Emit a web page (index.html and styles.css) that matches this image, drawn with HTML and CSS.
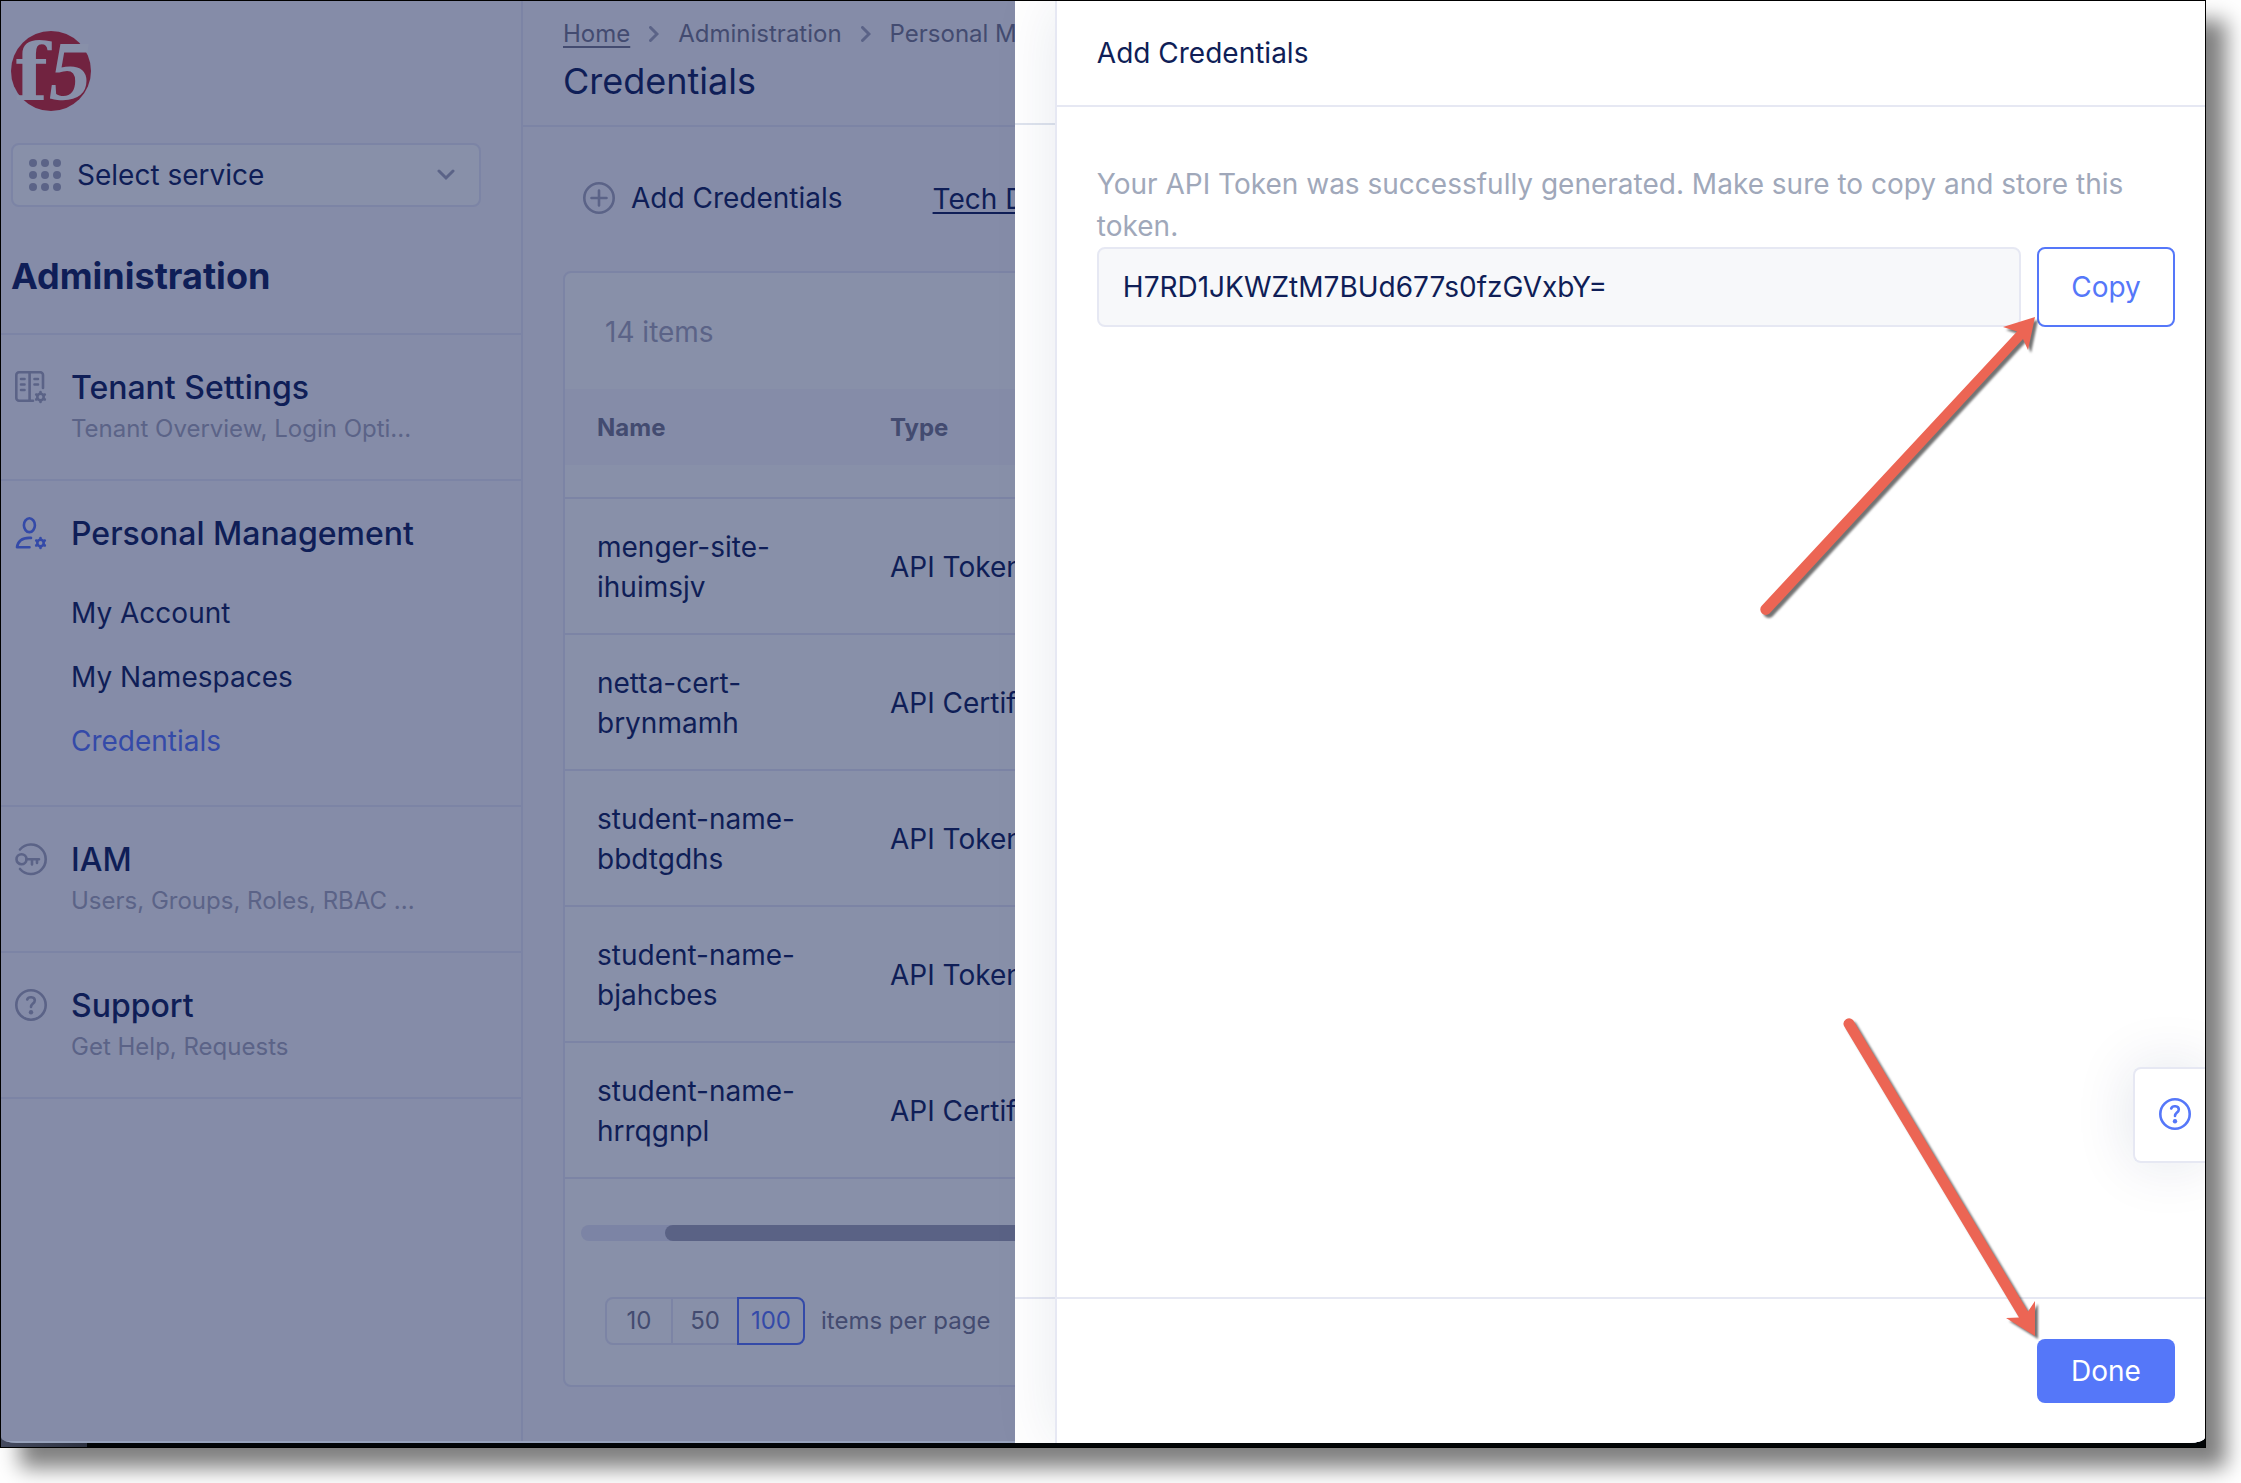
FILE: index.html
```html
<!DOCTYPE html>
<html lang="en">
<head>
<meta charset="utf-8">
<title>Credentials</title>
<link rel="stylesheet" href="styles.css">
</head>
<body>
<div class="window">
  <div class="screen">
    <div class="dashboard">
      <aside class="sidebar">
        <div class="sidebar-head">
          <svg class="logo" viewBox="0 0 80 80" role="img" aria-label="f5">
            <circle class="logo-disc" cx="40" cy="40" r="40"/>
            <text class="logo-f" x="3" y="69">f</text>
            <text class="logo-5" x="38" y="69">5</text>
          </svg>
          <div class="service">
            <svg class="icon fill" viewBox="0 0 32 32" aria-hidden="true">
              <circle cx="4" cy="4" r="4"/><circle cx="16" cy="4" r="4"/><circle cx="28" cy="4" r="4"/>
              <circle cx="4" cy="16" r="4"/><circle cx="16" cy="16" r="4"/><circle cx="28" cy="16" r="4"/>
              <circle cx="4" cy="28" r="4"/><circle cx="16" cy="28" r="4"/><circle cx="28" cy="28" r="4"/>
            </svg>
            <select class="service-select" aria-label="Service"><option>Select service</option></select>
            <svg class="chevron-down" viewBox="0 0 18 12" aria-hidden="true"><path d="M2 2l7 7 7-7"/></svg>
          </div>
          <h2 class="workspace">Administration</h2>
        </div>
        <nav class="nav">
          <section class="nav-item">
            <svg class="icon" viewBox="0 0 32 32" aria-hidden="true">
              <path d="M28 17V4a2.700 2.700 0 0 0-2.700-2.700H4A2.700 2.700 0 0 0 1.300 4v23A2.700 2.700 0 0 0 4 29.700h14M14.600 1.300v28M6 8h3.500M6 13.500h3.500M6 19h3.500M19.500 8H23M19.500 13.500H23"/>
              <g id="gear">
                <circle cx="25.500" cy="26" r="3.200"/>
                <path d="M25.500 21v1M25.500 30v1M21.200 23.500l.9.500M28.900 28l.9.500M21.200 28.500l.9-.5M28.900 24l.9-.5"/>
              </g>
            </svg>
            <div>
              <a class="nav-title" href="#">Tenant Settings</a>
              <p class="nav-sub">Tenant Overview, Login Opti...</p>
            </div>
          </section>
          <section class="nav-item active">
            <svg class="icon" viewBox="0 0 32 32" aria-hidden="true">
              <ellipse cx="14.400" cy="8.200" rx="5.500" ry="6.900"/>
              <path d="M16 20.900C8 20.400 3 23.500 2 30.300h12.500"/>
              <use href="#gear"/>
            </svg>
            <div>
              <a class="nav-title" href="#">Personal Management</a>
              <ul class="nav-links">
                <li><a href="#">My Account</a></li>
                <li><a href="#">My Namespaces</a></li>
                <li><a class="current" href="#">Credentials</a></li>
              </ul>
            </div>
          </section>
          <section class="nav-item">
            <svg class="icon" viewBox="0 0 32 32" aria-hidden="true">
              <path d="M5 6.500a14.700 14.700 0 1 1 0 19.500M11.500 16.200H24M17 16.500v5M22 16.500v3.500"/>
              <circle cx="6.500" cy="16.200" r="5"/>
            </svg>
            <div>
              <a class="nav-title" href="#">IAM</a>
              <p class="nav-sub">Users, Groups, Roles, RBAC ...</p>
            </div>
          </section>
          <section class="nav-item">
            <svg class="icon" viewBox="0 0 32 32" aria-hidden="true">
              <circle cx="16" cy="16" r="14.700"/>
              <path d="M12.200 10.500c1.200-3.400 7.600-3 7.600 1 0 3-3.800 3.200-3.800 6.500"/>
              <circle class="dot" cx="16" cy="23.200" r="2.200"/>
            </svg>
            <div>
              <a class="nav-title" href="#">Support</a>
              <p class="nav-sub">Get Help, Requests</p>
            </div>
          </section>
        </nav>
      </aside>
      <main class="main">
        <header class="page-head">
          <nav class="crumbs" aria-label="Breadcrumb">
            <a href="#">Home</a>
            <svg class="chevron-right" viewBox="0 0 10 16" aria-hidden="true"><path d="M1.500 1.500L8 8l-6.500 6.500"/></svg>
            <span>Administration</span>
            <svg class="chevron-right" viewBox="0 0 10 16" aria-hidden="true"><path d="M1.500 1.500L8 8l-6.500 6.500"/></svg>
            <span>Personal Management</span>
          </nav>
          <h1 class="page-title">Credentials</h1>
        </header>
        <div class="toolbar">
          <button class="add" type="button">
            <svg class="icon" viewBox="0 0 32 32" aria-hidden="true"><circle cx="16" cy="16" r="14.700"/><path d="M16 8.500v15M8.500 16h15"/></svg>
            Add Credentials
          </button>
          <a class="docs" href="#">Tech Docs</a>
        </div>
        <section class="card">
          <p class="count">14 items</p>
          <table class="table">
            <thead><tr><th class="col-name">Name</th><th>Type</th></tr></thead>
            <tbody>
              <tr class="spacer"><td colspan="2"></td></tr>
              <tr><td>menger-site-ihuimsjv</td><td>API Token</td></tr>
              <tr><td>netta-cert-brynmamh</td><td>API Certificate</td></tr>
              <tr><td>student-name-bbdtgdhs</td><td>API Token</td></tr>
              <tr><td>student-name-bjahcbes</td><td>API Token</td></tr>
              <tr><td>student-name-hrrqgnpl</td><td>API Certificate</td></tr>
            </tbody>
          </table>
          <div class="scroll-track"><div class="scroll-thumb"></div></div>
          <div class="pager">
            <div class="sizes">
              <button type="button">10</button><button type="button">50</button><button class="chosen" type="button">100</button>
            </div>
            <span>items per page</span>
          </div>
        </section>
      </main>
    </div>

    <div class="drawer" role="dialog" aria-labelledby="drawer-title">
      <div class="gutter">
        <div class="gutter-head"></div>
        <div class="gutter-foot"></div>
      </div>
      <div class="panel">
        <header class="panel-head"><h2 id="drawer-title">Add Credentials</h2></header>
        <div class="panel-body">
          <label class="message" for="token">Your API Token was successfully generated. Make sure to copy and store this token.</label>
          <div class="token-row">
            <input class="token" id="token" type="text" value="H7RD1JKWZtM7BUd677s0fzGVxbY=" readonly>
            <button class="btn btn-outline" type="button">Copy</button>
          </div>
        </div>
        <footer class="panel-foot"><button class="btn btn-primary" type="button">Done</button></footer>
      </div>
      <button class="help" type="button" aria-label="Help">
        <svg class="icon" viewBox="0 0 32 32" aria-hidden="true">
          <circle cx="16" cy="16" r="14.700"/>
          <path d="M12.200 10.500c1.200-3.400 7.600-3 7.600 1 0 3-3.800 3.200-3.800 6.500"/>
          <circle class="dot" cx="16" cy="23.200" r="2.200"/>
        </svg>
      </button>
      <svg class="arrow arrow-copy" viewBox="0 0 290 320" aria-hidden="true">
        <path d="M280 12L248 22 262 26.500 6.500 301A5.500 5.500 0 0 0 14.500 308.500L268 34 273 45z"/>
      </svg>
      <svg class="arrow arrow-done" viewBox="0 0 210 335" aria-hidden="true">
        <path d="M200 326L171 308 184 307.500 9 16A5.500 5.500 0 0 1 18 10L193 301.500 200 291z"/>
      </svg>
    </div>
  </div>
</div>
</body>
</html>
```
FILE: styles.css
```css
:root {
  --ink: #0f1e57;
  --page: #858ca8;
  --card: #8890a9;
  --line: #7c84a5;
  --muted: #5b6387;
  --mid: #434b70;
  --accent-dim: #344aa8;
  --accent: #5577f9;
  --rule: #e6e8f3;
}

* { box-sizing: border-box; }

body {
  margin: 0;
  min-height: 100vh;
  background: #fff;
  color: var(--ink);
  font-family: Inter, "Liberation Sans", sans-serif;
  font-size: 28px;
  line-height: 40px;
  font-optical-sizing: none;
}

h1, h2, p, ul { margin: 0; padding: 0; }
ul { list-style: none; }
a { color: inherit; text-decoration: none; }
button, input, select { font: inherit; color: inherit; letter-spacing: inherit; }
button { margin: 0; padding: 0; cursor: pointer; }
svg { display: block; flex: none; }

.window {
  display: flex;
  width: calc(100% - 35px);
  min-height: calc(100vh - 35px);
  padding-bottom: 4px;
  border: 1px solid #000;
  background: linear-gradient(90deg, #454b60, #2c3140) left bottom / 86px 16px no-repeat #020507;
  box-shadow: 20px 20px 20px rgba(0, 0, 0, .5);
}

.screen {
  position: relative;
  display: flex;
  flex: 1;
  min-width: 0;
  overflow: hidden;
  border-radius: 0 0 16px 16px / 0 0 6px 6px;
}

.dashboard {
  display: grid;
  flex: 1;
  grid-template-columns: 522px minmax(0, 1fr);
  background: var(--page);
  border-bottom: 2px solid #98a3bd;
}

.icon {
  width: 32px;
  height: 32px;
  overflow: visible;
  fill: none;
  stroke: var(--muted);
  stroke-width: 2.6;
  stroke-linecap: round;
  stroke-linejoin: round;
}
.icon.fill { fill: var(--muted); stroke: none; }
.icon .dot { fill: var(--muted); stroke: none; }

/* Sidebar */
.sidebar { border-right: 2px solid var(--line); }
.sidebar-head { padding: 30px 40px 35px 10px; }
.logo { width: 80px; height: 80px; overflow: visible; fill: var(--card); font-weight: 700; }
.logo-disc { fill: #712340; }
.logo-f { font-family: "DejaVu Serif", serif; font-size: 78px; }
.logo-5 { font-family: "Liberation Serif", serif; font-size: 84px; font-style: italic; }

.service {
  display: flex;
  align-items: center;
  height: 64px;
  margin-top: 32px;
  padding: 0 24px 0 16px;
  border: 2px solid var(--line);
  border-radius: 8px;
  background: var(--card);
}
.service-select {
  flex: 1;
  height: 40px;
  margin-left: 16px;
  padding: 0;
  border: 0;
  background: none;
  appearance: none;
}
.chevron-down { width: 18px; height: 12px; }
.chevron-right { width: 10px; height: 16px; }
.chevron-down, .chevron-right { fill: none; stroke: var(--muted); stroke-width: 3; stroke-linecap: round; }

.workspace { margin-top: 47px; font-size: 36px; line-height: 44px; }

.nav-item {
  display: flex;
  gap: 24px;
  padding: 33px 14px;
  border-top: 2px solid var(--line);
}
.nav-item:last-child { border-bottom: 2px solid var(--line); }
.nav-item > .icon { margin-top: 3px; }
.nav-item.active { padding-bottom: 32px; }
.nav-item.active .icon { stroke: var(--accent-dim); }
.nav-title { display: block; font-size: 32px; font-weight: 500; }
.nav-sub { margin-top: 4px; color: var(--muted); font-size: 24px; line-height: 34px; }
.nav-links { margin-top: 27px; line-height: 64px; }
.nav-links .current { color: var(--accent-dim); }

/* Page */
.page-head { padding: 17px 40px 20px; border-bottom: 2px solid var(--line); }
.crumbs {
  display: flex;
  align-items: center;
  gap: 19px;
  color: var(--mid);
  font-size: 24px;
  line-height: 32px;
  white-space: nowrap;
}
.crumbs a { text-decoration: underline; text-decoration-thickness: 2px; text-underline-offset: 4px; }
.page-title { margin-top: 7px; font-size: 36px; font-weight: 400; line-height: 48px; }

.toolbar { display: flex; align-items: center; gap: 90px; padding: 50px 60px 52px; }
.add { display: flex; align-items: center; gap: 16px; border: 0; background: none; }
.docs { padding-top: 2px; text-decoration: underline; text-decoration-thickness: 2px; text-underline-offset: 3px; }

.card { margin: 0 40px; border: 2px solid var(--line); border-radius: 8px; background: var(--card); }
.count { padding: 39px 40px 37px; color: var(--muted); }

.table { width: 100%; border-spacing: 0; table-layout: fixed; }
.table th { height: 76px; padding: 2px 32px 0; background: var(--page); color: var(--mid); font-size: 24px; text-align: left; }
.table .col-name { width: 293px; }
.table td { padding: 28px 32px 26px; border-bottom: 2px solid var(--line); }
.table .spacer td { height: 34px; padding: 0; }

.scroll-track { height: 16px; margin: 46px 16px 0; border-radius: 8px; background: var(--line); }
.scroll-thumb { height: 16px; margin-left: 84px; border-radius: 8px; background: #5a6285; }

.pager { display: flex; align-items: center; gap: 16px; padding: 56px 40px 40px; color: var(--mid); font-size: 24px; }
.sizes { display: flex; padding-left: 2px; }
.sizes button { width: 68px; height: 48px; margin-left: -2px; border: 2px solid var(--line); background: none; line-height: 40px; }
.sizes button:first-child { border-radius: 8px 0 0 8px; }
.sizes .chosen { border-color: var(--accent-dim); border-radius: 0 8px 8px 0; color: var(--accent-dim); }

/* Drawer */
.drawer { position: absolute; inset: 0 0 0 auto; display: flex; width: 54%; background: #fff; }
.gutter { display: flex; flex-direction: column; justify-content: space-between; width: 40px; }
.gutter-head { height: 124px; border-bottom: 2px solid #dfe4ee; }
.gutter-foot { height: 146px; border-top: 2px solid var(--rule); }

.panel {
  display: flex;
  flex: 1;
  flex-direction: column;
  min-width: 0;
  border-left: 2px solid var(--rule);
  background: #fff;
  box-shadow: 0 0 60px rgba(15, 40, 87, .1);
}
.panel-head { padding: 32px 40px; border-bottom: 2px solid var(--rule); }
.panel-head h2 { font-size: 28px; font-weight: 400; }
.panel-body { flex: 1; padding: 56px 30px 0 40px; }
.message { display: block; color: #a0a8ba; line-height: 42px; }
.token-row { display: flex; gap: 16px; height: 80px; }
.token {
  flex: 1;
  min-width: 0;
  padding: 0 24px;
  border: 2px solid var(--rule);
  border-radius: 8px;
  background: #f7f8fa;
}
.panel-foot { display: flex; justify-content: flex-end; padding: 40px 30px; border-top: 2px solid var(--rule); }

.btn { width: 138px; border-radius: 8px; }
.btn-outline { border: 2px solid var(--accent); background: #fff; color: var(--accent); }
.btn-primary { height: 64px; border: 0; background: var(--accent); color: #fff; }

.help {
  position: absolute;
  right: 0;
  bottom: 280px;
  width: 72px;
  height: 96px;
  padding: 0 0 2px 24px;
  border: 2px solid var(--rule);
  border-right: 0;
  border-radius: 8px 0 0 8px;
  background: #fff;
  box-shadow: 0 0 60px rgba(15, 30, 87, .12);
}
.help .icon { stroke: var(--accent); }
.help .dot { fill: var(--accent); }

.arrow { position: absolute; right: 160px; fill: #ec6554; filter: drop-shadow(3px 3px 1px rgba(0, 0, 0, .55)); }
.arrow-copy { top: 304px; width: 290px; height: 320px; }
.arrow-done { bottom: 98px; width: 210px; height: 335px; }
```
